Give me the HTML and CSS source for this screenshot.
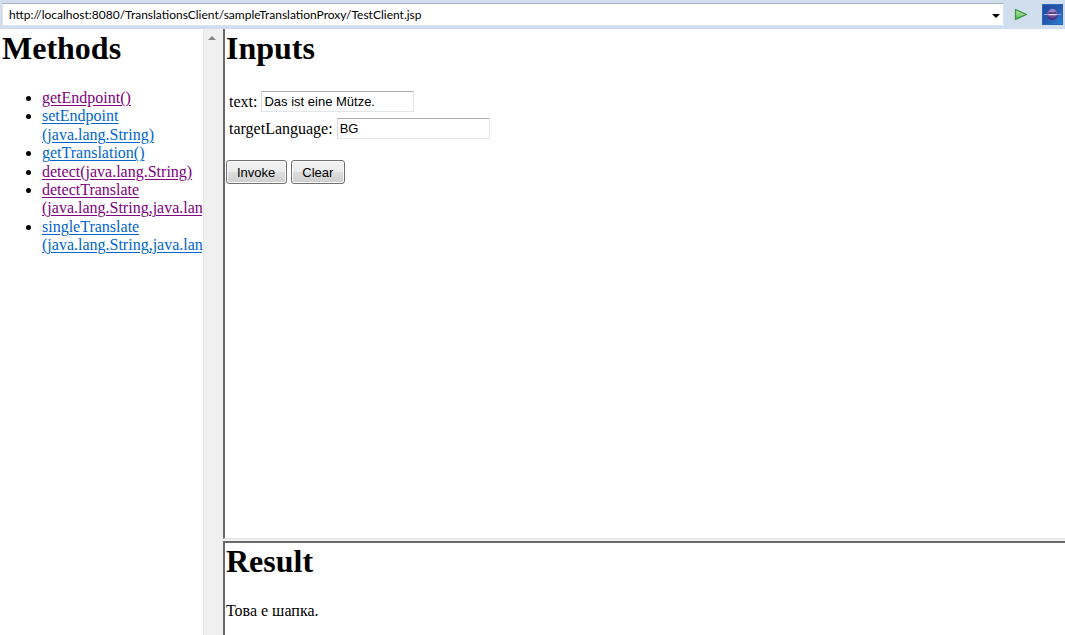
FILE: index.html
```html
<!DOCTYPE html>
<html lang="en">
<head>
<meta charset="utf-8">
<title>Web Services Test Client</title>
<link rel="stylesheet" href="styles.css">
</head>
<body>
<header class="address-bar">
  <div class="address-field">
    <input class="address-input" type="text" aria-label="Address" value="http://localhost:8080/TranslationsClient/sampleTranslationProxy/TestClient.jsp">
    <button class="icon-button history" type="button" aria-label="Address history">
      <svg width="8" height="4" viewBox="0 0 8 4"><path d="M0 0h8L4 4z" fill="#000"/></svg>
    </button>
  </div>
  <button class="icon-button go" type="button" aria-label="Go">
    <svg width="14" height="13" viewBox="0 0 14 13">
      <defs><linearGradient id="go-fill" x1="0" y1="0" x2="0" y2="1"><stop offset="0" stop-color="#c8e8b4"/><stop offset=".5" stop-color="#8bd07e"/><stop offset="1" stop-color="#49ab50"/></linearGradient></defs>
      <path d="M1.500 1.500L12.500 6.500L1.500 11.500z" fill="url(#go-fill)" stroke="#3a9847" stroke-width="1.300" stroke-linejoin="round"/>
    </svg>
  </button>
  <button class="icon-button brand" type="button" aria-label="Eclipse">
    <svg width="21" height="21" viewBox="0 0 21 21">
      <defs>
        <linearGradient id="sky" x1="0" y1="0" x2="1" y2="1"><stop offset="0" stop-color="#1c4a9c"/><stop offset=".5" stop-color="#2557ad"/><stop offset="1" stop-color="#2f86d6"/></linearGradient>
        <radialGradient id="moon" cx=".5" cy=".2" r=".8"><stop offset="0" stop-color="#a795d6"/><stop offset=".55" stop-color="#7358ac"/><stop offset="1" stop-color="#3a2470"/></radialGradient>
      </defs>
      <rect width="21" height="21" fill="url(#sky)"/>
      <rect x=".5" y=".5" width="20" height="20" fill="none" stroke="#2c66b8"/>
      <circle cx="10.500" cy="10.300" r="5.500" fill="url(#moon)"/>
      <path d="M7 8.500h7l1 2h-9z" fill="#33205f"/>
      <path d="M2 10.500h17" stroke="#a09ae0" stroke-width="1"/>
      <path d="M6.500 10.500h8" stroke="#ead9fb" stroke-width="1.400"/>
    </svg>
  </button>
</header>
<div class="frames">
  <nav class="methods">
    <div class="methods-body">
      <h1>Methods</h1>
      <ul class="method-list">
        <li><a class="visited" href="#getEndpoint">getEndpoint()</a></li>
        <li><a href="#setEndpoint">setEndpoint<wbr>(java.lang.String)</a></li>
        <li><a href="#getTranslation">getTranslation()</a></li>
        <li><a class="visited" href="#detect">detect(java.lang.String)</a></li>
        <li><a class="visited" href="#detectTranslate">detectTranslate<wbr>(java.lang.String,java.lang.String)</a></li>
        <li><a href="#singleTranslate">singleTranslate<wbr>(java.lang.String,java.lang.String)</a></li>
      </ul>
    </div>
    <div class="scroll-track">
      <svg width="8" height="4" viewBox="0 0 8 4"><path d="M0 4L4 0L8 4z" fill="#858585"/></svg>
    </div>
  </nav>
  <div class="main">
    <main class="pane inputs">
      <h1>Inputs</h1>
      <form>
        <div class="fields">
          <div class="field"><label for="text">text:</label><input id="text" type="text" value="Das ist eine Mütze."></div>
          <div class="field"><label for="target">targetLanguage:</label><input id="target" type="text" value="BG"></div>
        </div>
        <div class="actions">
          <button class="action" type="button">Invoke</button>
          <button class="action" type="reset">Clear</button>
        </div>
      </form>
    </main>
    <section class="pane result">
      <h1>Result</h1>
      <p lang="bg">Това е шапка.</p>
    </section>
  </div>
</div>
</body>
</html>
```
FILE: styles.css
```css
* {
  box-sizing: border-box;
}

body {
  margin: 0;
  height: 100vh;
  display: flex;
  flex-direction: column;
  overflow: hidden;
  background: #fff;
  color: #000;
  font: 16px/1.15 "Liberation Serif", "Times New Roman", serif;
}

h1 {
  margin: 0;
  font-size: 32px;
  line-height: 37px;
}

.address-bar {
  display: flex;
  align-items: center;
  flex: none;
  height: 29px;
  padding: 0 2px;
  background: #d0deee;
}

.address-field {
  display: flex;
  align-items: center;
  flex: 1;
  height: 23px;
  border: 1px solid #dce4ee;
  border-top-color: #a9b3c1;
  background: #fff;
}

.address-input {
  flex: 1;
  min-width: 0;
  padding: 0 6px;
  border: 0;
  outline: 0;
  background: transparent;
  color: #000;
  font: 12px Lato, "Open Sans", sans-serif;
}

.icon-button {
  display: flex;
  padding: 0;
  border: 0;
  background: none;
}

.history {
  margin: 2px 3px 0 0;
}

.go {
  margin: 0 14px 0 10px;
}

.frames {
  display: flex;
  flex: 1;
  min-height: 0;
}

.methods {
  display: flex;
  flex: none;
  width: 220px;
}

.methods-body {
  flex: 1;
  min-width: 0;
  padding: 1px 0 0 2px;
  overflow: hidden;
}

.method-list {
  margin: 22px 0 0;
  padding-left: 40px;
}

.method-list a {
  color: #0066cc;
  text-underline-offset: 2px;
}

.method-list .visited {
  color: #800080;
}

.scroll-track {
  display: flex;
  justify-content: center;
  flex: none;
  width: 17px;
  padding-top: 7px;
  border-left: 1px solid #e4e4e4;
  background: #f0f0f0;
}

.main {
  display: flex;
  flex-direction: column;
  flex: 1;
  min-width: 0;
  padding-left: 3px;
  background: #f0f0f0;
}

.pane {
  border-left: 2px solid #696969;
  background: #fff;
}

.inputs {
  flex: 1;
  padding: 1px 0 0 1px;
  border-bottom: 1px solid #e3e3e3;
}

.result {
  flex: none;
  height: 94px;
  margin-top: 2px;
  padding: 0 0 0 1px;
  border-top: 2px solid #696969;
}

.result p {
  margin: 22px 0 0;
}

.fields {
  display: flex;
  flex-direction: column;
  gap: 6px;
  padding: 24px 3px 21px;
}

.field {
  display: flex;
  align-items: center;
  gap: 4px;
}

.field label {
  padding-top: 2px;
}

.field input {
  width: 153px;
  height: 21px;
  padding: 0 2px;
  border: 1px solid #e2e6ea;
  border-top-color: #abadb3;
  border-left-color: #d6dae0;
  color: #000;
  font: 13px "Liberation Sans", Arial, sans-serif;
}

.actions {
  display: flex;
  gap: 4px;
}

.action {
  height: 24px;
  padding: 0 11px 0 10px;
  border: 1px solid #707070;
  border-radius: 3px;
  background: linear-gradient(#f2f2f2 0, #ebebeb 50%, #dddddd 50%, #cfcfcf 100%);
  box-shadow: inset 0 0 0 1px #fafafa;
  color: #000;
  font: 13px "Liberation Sans", Arial, sans-serif;
}
```
